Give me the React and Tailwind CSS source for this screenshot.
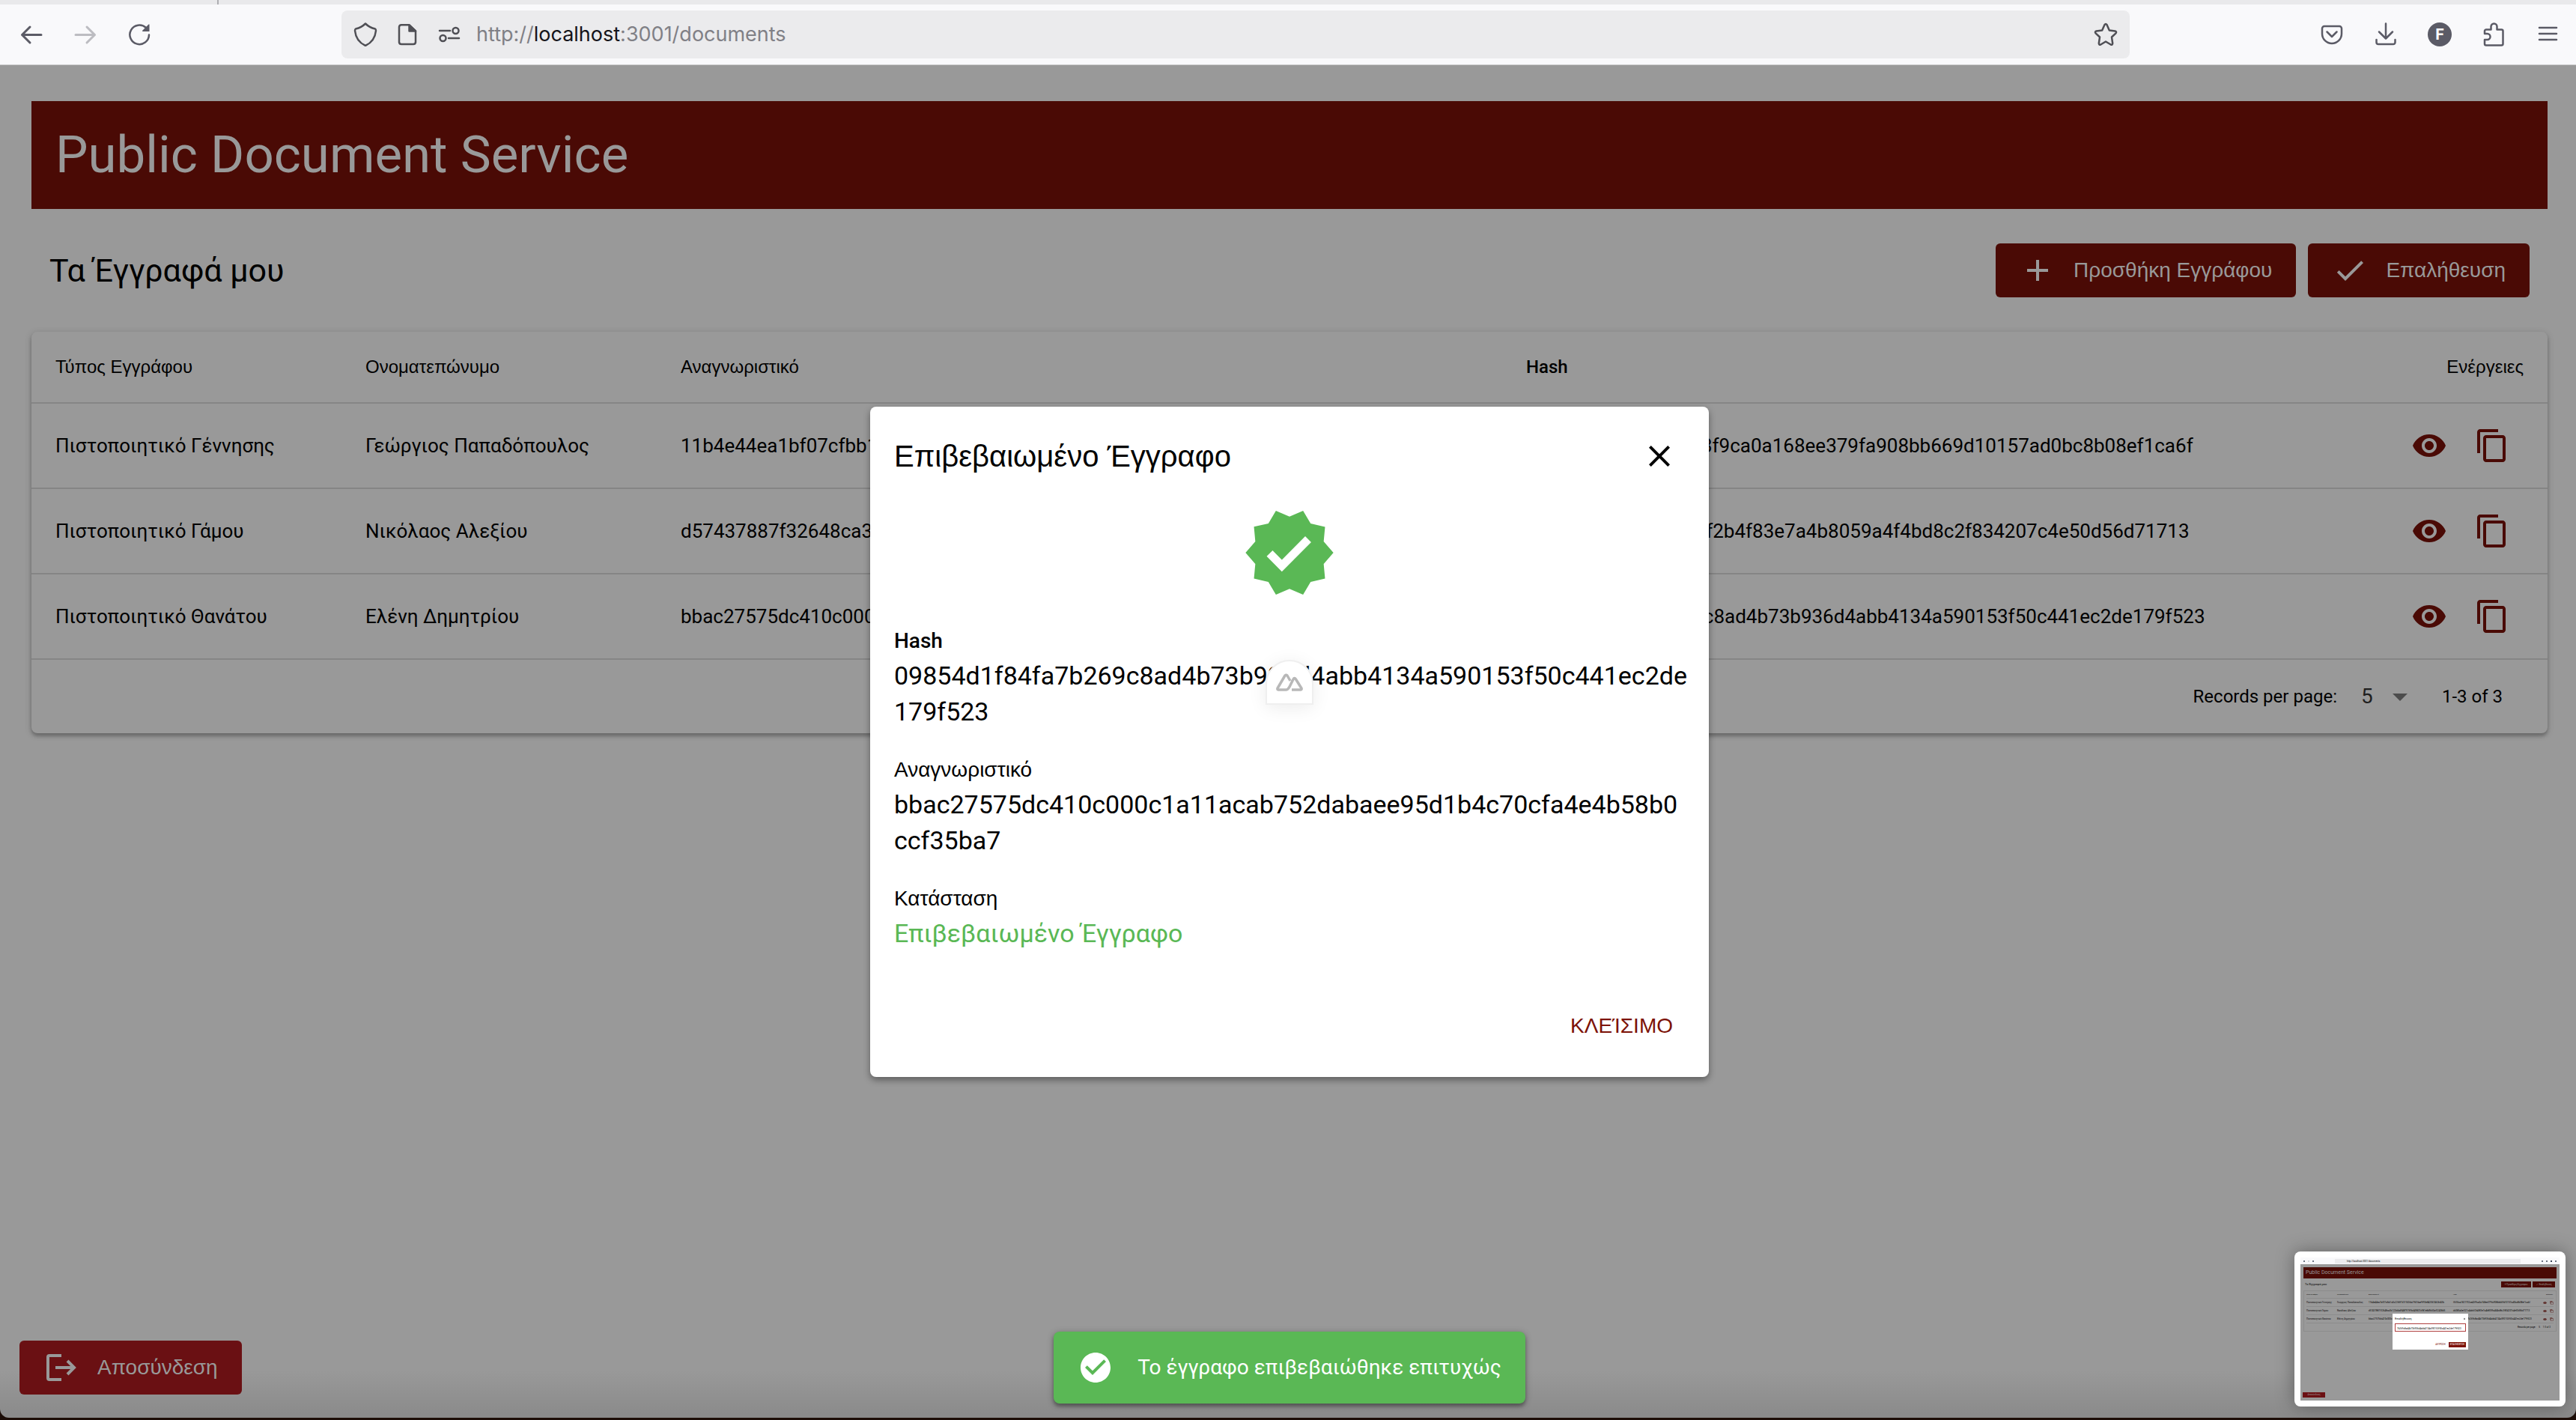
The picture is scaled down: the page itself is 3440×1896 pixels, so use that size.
import React from "react";
import { MdAdd, MdCheck, MdVisibility, MdContentCopy, MdClose, MdVerified, MdCheckCircle, MdArrowDropDown } from "react-icons/md";

const rows = [
  {
    type: "Πιστοποιητικό Γέννησης",
    name: "Γεώργιος Παπαδόπουλος",
    id: "11b4e44ea1bf07cfbb1a0c22fb97d1f160fda1967dae9f93e842067462bf43b",
    hash: "f5f36ca1821702ce43f9ca0a168ee379fa908bb669d10157ad0bc8b08ef1ca6f",
  },
  {
    type: "Πιστοποιητικό Γάμου",
    name: "Νικόλαος Αλεξίου",
    id: "d57437887f32648ca3b122b6bd9487919f9c649837c981e8d9b50af02438d5",
    hash: "dd385a5ef321c4ab6f2b4f83e7a4b8059a4f4bd8c2f834207c4e50d56d71713",
  },
  {
    type: "Πιστοποιητικό Θανάτου",
    name: "Ελένη Δημητρίου",
    id: "bbac27575dc410c000c1a11acab752dabaee95d1b4c70cfa4e4b58b0ccf35ba7",
    hash: "09854d1f84fa7b269c8ad4b73b936d4abb4134a590153f50c441ec2de179f523",
  },
];

function Line({ children, className = "size-8" }) {
  return (
    <svg viewBox="0 0 32 32" fill="none" stroke="currentColor" strokeWidth="2.500" strokeLinecap="round" strokeLinejoin="round" className={className} aria-hidden="true">
      {children}
    </svg>
  );
}

function Toolbar() {
  return (
    <header className="bg-[#f9f9fb] border-b border-[#cccccd]">
      <div className="h-1.5 bg-[#e9e9eb] flex pl-[290px]">
        <div className="w-0.5 bg-[#aeaeb2]" />
      </div>
      <div className="h-20 flex items-center text-[#5b5b66]">
        <nav className="flex w-[456px] items-center gap-10 pl-[26px]">
          <button aria-label="Back"><Line><path d="M29 16.500H3.500M14 6L3.500 16.500L14 27" strokeWidth="3" /></Line></button>
          <button aria-label="Forward" className="text-[#bcbcc1]"><Line><path d="M3 16.500H28.500M18 6L28.500 16.500L18 27" strokeWidth="3" /></Line></button>
          <button aria-label="Reload"><Line><path d="M29 16.500A12.800 12.800 0 1 1 25 7" /><path d="M29.500 2.500V12H20.500Q19.500 11.500 20.500 10.500L28.500 2.500Z" fill="currentColor" stroke="none" /></Line></button>
        </nav>
        <div className="h-16 flex-1 rounded-lg bg-[#ebebed] flex items-center gap-5 pl-4 pr-4 text-[#4f4f55]">
          <div className="flex items-center gap-6">
            <Line><path d="M16 1.500C20 5.500 24.500 7.500 29 8.500Q30 9 30 11C29 21 24.500 27 16 31C7.500 27 3 21 2 11Q2 9 3 8.500C7.500 7.500 12 5.500 16 1.500Z" /></Line>
            <Line>
              <path d="M5 6A3 3 0 0 1 8 3.300H18.500L27 11.500V26.500A3 3 0 0 1 24 29H8A3 3 0 0 1 5 26.500Z" />
              <path d="M18.500 3.300V11.500H27Z" fill="currentColor" />
            </Line>
            <Line><path d="M3 11H17M15 21H29" /><circle cx="24.500" cy="11" r="4" /><circle cx="7.500" cy="21" r="4" /></Line>
          </div>
          <div className="flex-1 text-[27px] leading-10 text-[#808086] font-['Inter',sans-serif]">
            http://<span className="text-[#15141a]">localhost</span>:3001/documents
          </div>
          <button aria-label="Bookmark"><Line><path d="M14.500 3Q16 1 17.500 3L20.800 10.500L28.500 11.500Q31 12.300 29.500 14.300L24 19.500L25.200 28Q25 30.500 22.700 29.500L16 25.500L9.300 29.500Q7 30.500 6.800 28L8 19.500L2.500 14.300Q1 12.300 3.500 11.500L11.200 10.500Z" /></Line></button>
        </div>
        <div className="flex w-[596px] items-center justify-end gap-10 pr-[22px]">
          <button aria-label="Pocket"><Line><path d="M6 5H26A3 3 0 0 1 29 8V15A13 13 0 0 1 3 15V8A3 3 0 0 1 6 5Z" /><path d="M9.500 12.500L16 19L22.500 12.500" /></Line></button>
          <button aria-label="Downloads"><Line><path d="M16 1.500V21M7 12.500L16 21.500L25 12.500M3.500 23V26.500A2.500 2.500 0 0 0 6 29H26A2.500 2.500 0 0 0 28.500 26.500V23" /></Line></button>
          <button aria-label="Account" className="size-8 rounded-full bg-[#5b5b66] text-white text-xl leading-8 font-bold font-['Inter',sans-serif]">F</button>
          <button aria-label="Extensions"><Line><path d="M4 14V11.500A2 2 0 0 1 6 9.500H12.500V5.500A4 4 0 0 1 20.500 5.500V9.500H26.500A2 2 0 0 1 28.500 11.500V28.500A2 2 0 0 1 26.500 30.500H6A2 2 0 0 1 4 28.500V23H7.500A4 4 0 0 0 7.500 15H4Z" /></Line></button>
          <button aria-label="Menu"><Line><path d="M5 7H28M5 15H28M5 23H28" /></Line></button>
        </div>
      </div>
    </header>
  );
}

const actionButton =
  "flex h-18 items-center gap-6 rounded-md bg-[#4a0a05] px-8 text-[28px] text-[#999999] font-['Liberation_Sans',sans-serif]";

function Documents() {
  return (
    <main className="pt-12 pl-[42px] pr-[38px]">
      <h1 className="bg-[#4a0a05] text-[#999999] text-[69px] leading-20 px-8 py-8">Public Document Service</h1>
      <div className="flex items-center justify-between px-6 pt-[46px] pb-[46px]">
        <h2 className="text-[43px] leading-[64px]">Τα Έγγραφά μου</h2>
        <div className="flex gap-4">
          <button className={actionButton}>
            <MdAdd className="size-12" />Προσθήκη Εγγράφου
          </button>
          <button className={actionButton}>
            <MdCheck className="size-12" />Επαλήθευση
          </button>
        </div>
      </div>
      <section className="rounded-lg shadow-[0_2px_10px_rgba(0,0,0,0.2),0_4px_4px_rgba(0,0,0,0.2)]">
        <table className="w-full table-fixed text-left">
          <colgroup>
            <col className="w-[414px]" />
            <col className="w-[421px]" />
            <col className="w-[1129px]" />
            <col />
            <col className="w-[240px]" />
          </colgroup>
          <thead>
            <tr className="h-[95px] border-b-2 border-[#858585] text-2xl font-['Liberation_Sans',sans-serif]">
              <th className="pl-8 font-normal">Τύπος Εγγράφου</th>
              <th className="pl-8 font-normal">Ονοματεπώνυμο</th>
              <th className="pl-8 font-normal">Αναγνωριστικό</th>
              <th className="pl-8 font-medium font-['Roboto',sans-serif]">Hash</th>
              <th className="pr-8 text-right font-normal">Ενέργειες</th>
            </tr>
          </thead>
          <tbody>
            {rows.map((r) => (
              <tr key={r.id} className="h-[114px] border-b-2 border-[#858585] text-[26px]">
                <td className="pl-8 whitespace-nowrap">{r.type}</td>
                <td className="pl-8 whitespace-nowrap">{r.name}</td>
                <td className="pl-8 whitespace-nowrap">{r.id}</td>
                <td className="pl-8 whitespace-nowrap">{r.hash}</td>
                <td className="pr-8">
                  <div className="flex justify-end text-[#4a0a05]">
                    <button className="p-[18px]" aria-label="Προβολή"><MdVisibility className="size-12" /></button>
                    <button className="p-[18px]" aria-label="Αντιγραφή"><MdContentCopy className="size-12" /></button>
                  </div>
                </td>
              </tr>
            ))}
          </tbody>
        </table>
        <div className="flex h-[98px] items-center justify-end pr-15 text-2xl">
          <label htmlFor="per-page">Records per page:</label>
          <div className="ml-8 mr-8 flex items-center text-[#1f1f1f]">
            <select id="per-page" className="appearance-none w-7 text-[28px]" defaultValue="5">
              <option>5</option>
            </select>
            <MdArrowDropDown className="size-12 text-[#4c4c4c]" />
          </div>
          <span>1-3 of 3</span>
        </div>
      </section>
    </main>
  );
}

function Field({ label, labelClass = "font-['Liberation_Sans',sans-serif]", valueClass = "", children }) {
  return (
    <div>
      <dt className={"text-[28px] leading-11 " + labelClass}>{label}</dt>
      <dd className={"text-[34px] leading-12 break-all " + valueClass}>{children}</dd>
    </div>
  );
}

function Dialog() {
  return (
    <div role="dialog" aria-labelledby="dialog-title" className="w-[1120px] rounded-lg bg-white shadow-[0_4px_10px_rgba(0,0,0,0.4)]">
      <div className="flex h-[131px] items-center justify-between pl-8 pr-8">
        <h2 id="dialog-title" className="text-[40px] leading-16 font-['Liberation_Sans',sans-serif]">Επιβεβαιωμένο Έγγραφο</h2>
        <button className="p-2.5" aria-label="Κλείσιμο παραθύρου"><MdClose className="size-12" /></button>
      </div>
      <MdVerified className="mx-auto size-32 text-[#5ab855]" />
      <dl className="flex flex-col gap-8 pl-8 pr-[26px] pt-8">
        <Field label="Hash" labelClass="font-medium">{rows[2].hash}</Field>
        <Field label="Αναγνωριστικό">{rows[2].id}</Field>
        <Field label="Κατάσταση" valueClass="text-[#5ab855]">Επιβεβαιωμένο Έγγραφο</Field>
      </dl>
      <div className="flex justify-end pt-16 pb-8 pr-4">
        <button className="h-18 px-8 text-[28px] text-[#7c1207] font-['Liberation_Sans',sans-serif]">ΚΛΕΊΣΙΜΟ</button>
      </div>
    </div>
  );
}

function Thumbnail() {
  return (
    <figure aria-label="Preview" className="rounded-lg bg-white p-2 w-[362px] shadow-[0_0_24px_rgba(0,0,0,0.35)]">
      <div className="relative h-[191px] bg-[#999999] overflow-hidden">
        <div className="flex h-[9px] items-center gap-1 bg-[#f9f9fb] px-1">
          <div className="size-0.5 bg-gray-500" />
          <div className="size-0.5 bg-gray-300" />
          <div className="size-0.5 bg-gray-500" />
          <div className="ml-6 flex-1 bg-[#ebebed] pl-4 text-[3px] leading-[6px]">http://localhost:3001/documents</div>
          <div className="ml-6 size-0.5 bg-gray-500" />
          <div className="size-0.5 bg-gray-500" />
          <div className="size-0.5 bg-gray-700" />
          <div className="size-0.5 bg-gray-500" />
        </div>
        <div className="mx-1 mt-1 bg-[#4a0a05] px-[3px] text-[7px] leading-[15px] text-[#999999]">Public Document Service</div>
        <div className="flex items-center justify-between px-[6px] pt-1 text-[4px] leading-2">
          <span>Τα Έγγραφά μου</span>
          <div className="flex gap-0.5 text-[3px] text-[#999999]">
            <span className="w-10 bg-[#4a0a05] text-center">+ Προσθήκη Εγγράφου</span>
            <span className="w-[30px] bg-[#4a0a05] text-center">✓ Επαλήθευση</span>
          </div>
        </div>
        <div className="mx-1 mt-1 border border-[#8c8c8c] px-[3px] text-[2px]">
          <div className="grid grid-cols-[41px_42px_113px_1fr_10px] h-[9px] items-center">
            <span>Τύπος Εγγράφου</span><span>Ονοματεπώνυμο</span><span>Αναγνωριστικό</span><span>Hash</span><span>Ενέργειες</span>
          </div>
          {rows.map((r) => (
            <div key={r.id} className="grid grid-cols-[41px_42px_113px_1fr_14px] h-[11px] items-center border-t border-[#8c8c8c] text-[3px] whitespace-nowrap">
              <span>{r.type}</span><span>{r.name}</span><span>{r.id}</span><span>{r.hash}</span>
              <span className="flex gap-1 text-[#4a0a05]"><MdVisibility className="size-[5px]" /><MdContentCopy className="size-[5px]" /></span>
            </div>
          ))}
          <div className="flex h-[11px] items-center justify-end gap-1 border-t border-[#8c8c8c] pr-1 text-[3px]">
            <span>Records per page:</span><span>5</span><span>1-3 of 3</span>
          </div>
        </div>
        <div className="absolute left-[123px] top-[75px] w-[101px] h-12 bg-white p-[3px]">
          <div className="flex items-center justify-between text-[4px] leading-2"><span>Επαλήθευση</span><MdClose className="size-1" /></div>
          <div className="mt-0.5 h-[11px] border border-[#b04040] px-0.5 pt-1 text-[3px] leading-[4px]">{rows[2].hash.slice(12)}</div>
          <div className="mt-3.5 flex items-center justify-end gap-1 text-[3px] leading-[7px]">
            <span className="text-[#7c1207]">ΑΚΥΡΩΣΗ</span><span className="bg-[#7c1207] px-0.5 text-white">ΕΠΑΛΗΘΕΥΣΗ</span>
          </div>
        </div>
        <div className="absolute bottom-1 left-[3px] w-[30px] bg-[#6b1013] text-center text-[3px] leading-[7px] text-[#999999]">Αποσύνδεση</div>
      </div>
    </figure>
  );
}

export default function App() {
  return (
    <div className="h-screen bg-[#1c0d07] pb-[3px] font-['Roboto',sans-serif] text-black">
      <div className="relative flex h-full flex-col overflow-hidden rounded-b-xl bg-[#999999]">
        <Toolbar />
        <Documents />
        <div className="absolute inset-x-0 bottom-0 h-16 bg-linear-to-b from-transparent to-black/10" />
        <button className="absolute bottom-[31px] left-[26px] flex h-18 items-center gap-6 rounded-md bg-[#6a1013] px-8 text-[28px] text-[#999999] font-['Liberation_Sans',sans-serif]">
          <svg viewBox="0 0 48 48" className="size-12" fill="none" stroke="currentColor" strokeWidth="4" aria-hidden="true">
            <path d="M24 8H8Q6 8 6 10V38Q6 40 8 40H24M16 24H40M32 15L41 24L32 33" />
          </svg>
          Αποσύνδεση
        </button>
        <div className="absolute inset-x-0 top-[543px] flex justify-center pl-1">
          <Dialog />
        </div>
        <div className="absolute inset-x-0 top-[881px] flex justify-center pl-1">
          <div className="flex h-15 w-16 items-center justify-center rounded-t-full border-2 border-[#efefef] bg-white shadow-[0_4px_24px_rgba(0,0,0,0.08)]">
            <svg viewBox="0 0 36 24" className="h-6 w-9" fill="none" stroke="#b8b8b8" strokeWidth="3.500" strokeLinejoin="round" aria-hidden="true">
              <path d="M13 22H3Q1.500 22 2 20L12 3Q13.500 1.500 15 3L19 10M13 22Q16 22 18 18L23 8Q24.500 5 26.500 8L34 20Q34.500 22 33 22H21" />
            </svg>
          </div>
        </div>
        <div className="absolute inset-x-0 bottom-[19px] flex justify-center pl-1">
          <div role="alert" className="flex h-24 items-center gap-8 rounded-lg bg-[#5ab855] px-8 text-[28px] text-white shadow-[0_2px_10px_rgba(0,0,0,0.3),0_4px_4px_rgba(0,0,0,0.25)]">
            <MdCheckCircle className="size-12" />Το έγγραφο επιβεβαιώθηκε επιτυχώς
          </div>
        </div>
        <div className="absolute bottom-[15px] right-[14px]"><Thumbnail /></div>
      </div>
    </div>
  );
}
